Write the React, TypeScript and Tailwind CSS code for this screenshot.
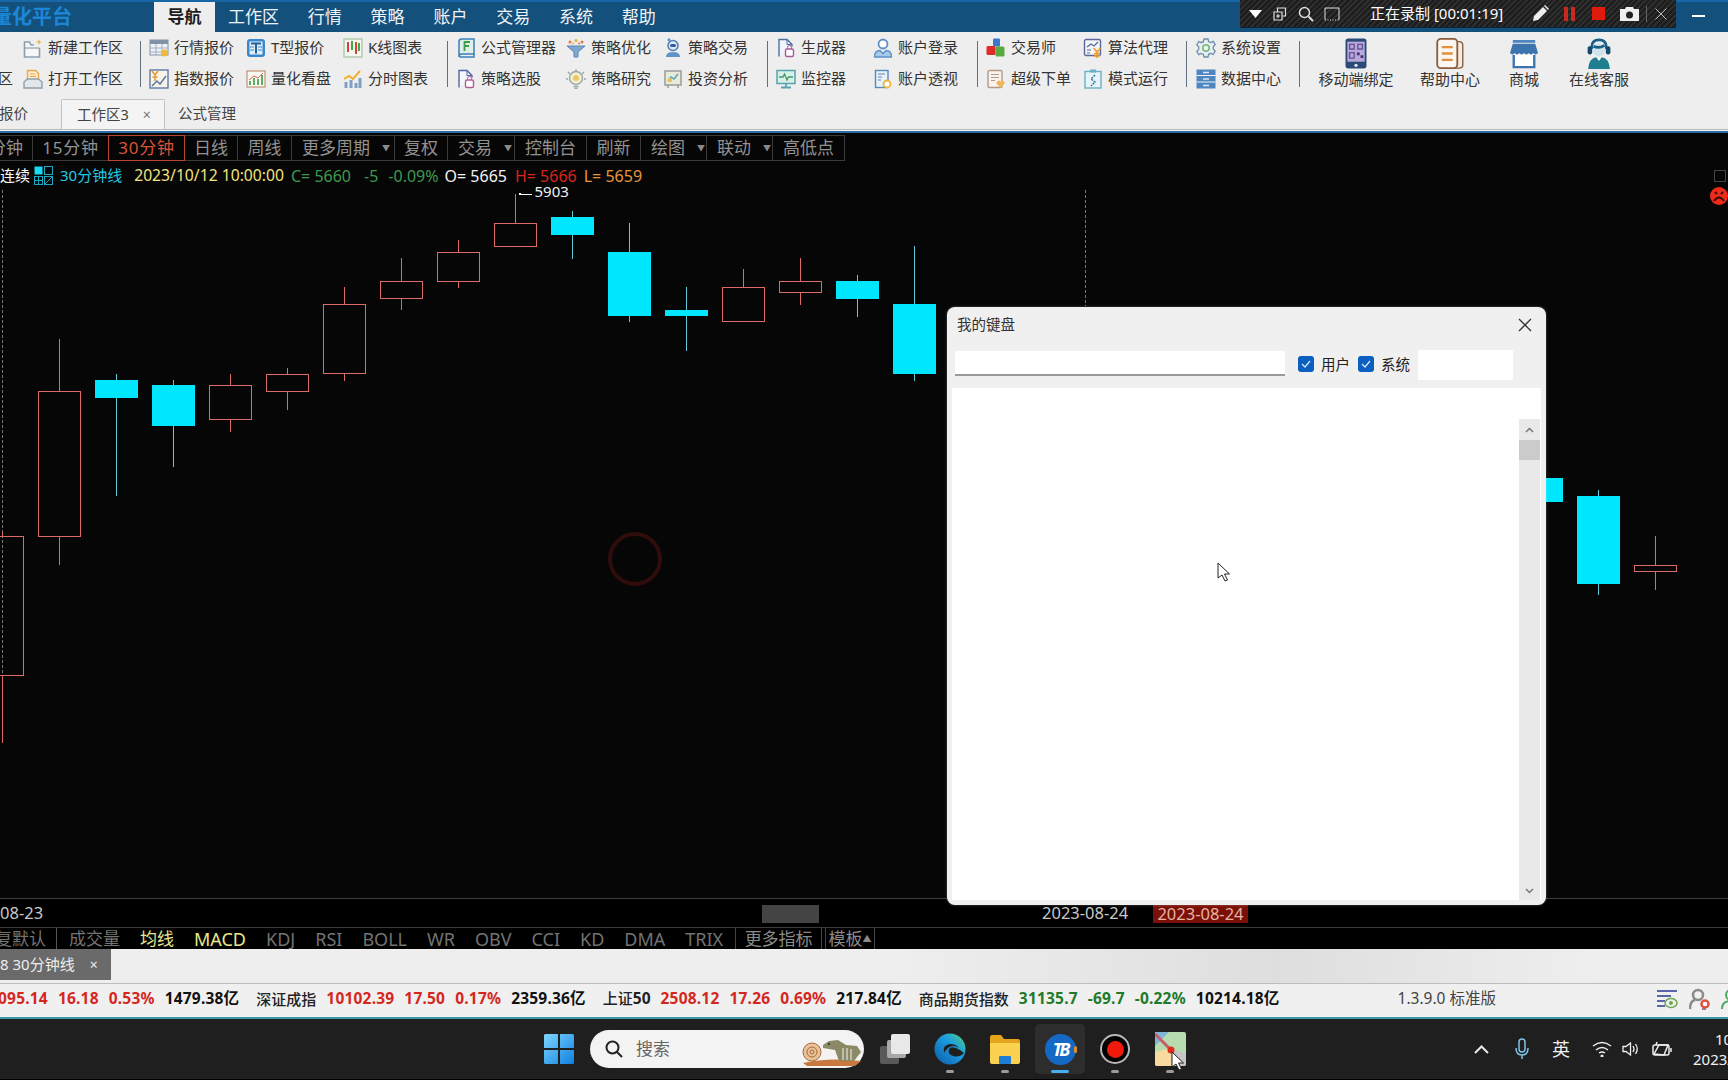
import React from 'react'

// --- ribbon icons, 20x20 ---
const Ic = ({ children, s = 20 }: { children: React.ReactNode; s?: number }) => (
  <svg width={s} height={s} viewBox="0 0 20 20" className="shrink-0" fill="none">
    {children}
  </svg>
)

const icons: Record<string, React.ReactNode> = {
  newspace: (
    <Ic>
      <path d="M11 7H8L6.500 4H1.500v15h15V10" stroke="#8ea0ae" strokeWidth="1.600" fill="#f4f6f7" />
      <path d="M1.500 10h15" stroke="#8ea0ae" strokeWidth="1.200" />
      <path d="M16 1l.8 2.200L19 4l-2.200.8L16 7l-.8-2.200L13 4l2.200-.8z" fill="#eeb64a" />
    </Ic>
  ),
  openspace: (
    <Ic>
      <path d="M4.500 10V1.500h8l3 3V10" fill="#fbeacb" stroke="#e8a850" strokeWidth="1.400" />
      <path d="M7 5h5M7 7.500h6" stroke="#e8a850" />
      <path d="M4.500 10h11l3.500 3v6H1v-6z" fill="#e3e7ea" stroke="#8ea0ae" strokeWidth="1.400" />
    </Ic>
  ),
  quote: (
    <Ic>
      <rect x="1" y="2" width="18" height="15" fill="#eef1f5" stroke="#8192a8" />
      <rect x="1" y="2" width="18" height="4" fill="#8192a8" />
      <path d="M1 10h18M1 14h18M7 6v11M13 6v11" stroke="#a3afc0" />
      <circle cx="15.500" cy="15" r="3.500" fill="#efb83e" />
    </Ic>
  ),
  index: (
    <Ic>
      <rect x="1" y="1" width="18" height="18" fill="#f7f3e8" stroke="#5e79a8" strokeWidth="1.400" />
      <path d="M3 2l3 4 3-4M6 6v6M3.500 8h5" stroke="#e5992d" strokeWidth="1.500" />
      <path d="M3 17l5-5 3 3 6-8" stroke="#5e79a8" strokeWidth="1.500" />
    </Ic>
  ),
  tquote: (
    <Ic>
      <rect x="1" y="1" width="18" height="18" rx="3" fill="#3b87c9" />
      <rect x="3.500" y="3.500" width="13" height="13" fill="#dfeefa" />
      <path d="M5 5.500h10M10 5.500v10" stroke="#1c5f9c" strokeWidth="2" />
      <path d="M4 9h4M4 12h4M12 9h4M12 12h4" stroke="#3b87c9" />
    </Ic>
  ),
  board: (
    <Ic>
      <rect x="1" y="2" width="18" height="16" fill="#fbf7f2" stroke="#b5805e" />
      <path d="M4 16v-4M8 16V9M12 16v-6M16 16V6" stroke="#5cae62" strokeWidth="2" />
      <path d="M3 11l5-4 4 2 5-5" stroke="#d9684d" />
    </Ic>
  ),
  kline: (
    <Ic>
      <rect x="1" y="1" width="18" height="18" fill="#f2f7ef" stroke="#a9c7a6" strokeWidth="1.300" />
      <path d="M5 4v10M13 4v12" stroke="#dc3f3a" strokeWidth="2" />
      <path d="M9 3v9M16 5v8" stroke="#45a648" strokeWidth="2" />
    </Ic>
  ),
  timechart: (
    <Ic>
      <path d="M1 10l5-3 4 3 7-8" stroke="#efb02e" strokeWidth="2" />
      <path d="M3 19v-6M8 19v-8M13 19v-5M17 19V9" stroke="#7da0c4" strokeWidth="3" />
    </Ic>
  ),
  formula: (
    <Ic>
      <path d="M3 3.500Q3 1 6 1h12v15H6q-3 0-3 2.500z" fill="#dff0ea" stroke="#3b7fb8" strokeWidth="1.500" />
      <path d="M3 18q0 1 3 1h12v-3" stroke="#3b7fb8" strokeWidth="1.500" />
      <path d="M14 4H8.500v9M8.500 8H13" stroke="#3f9a4a" strokeWidth="1.800" />
    </Ic>
  ),
  select: (
    <Ic>
      <path d="M3 18.500V1.500h8l5 5v2" fill="#f4f6fb" stroke="#55659b" strokeWidth="1.400" />
      <path d="M11 1.500v5h5" stroke="#55659b" />
      <rect x="9.500" y="11" width="8" height="7.500" rx="1.500" fill="#fff" stroke="#b65a9a" strokeWidth="1.400" />
      <path d="M11.500 11V9.500a2 2 0 014 0V11" stroke="#b65a9a" />
    </Ic>
  ),
  optimize: (
    <Ic>
      <path d="M1 8h18l-7 6v5h-4v-5z" fill="#7fa7d0" stroke="#5e86b3" />
      <circle cx="4" cy="4" r="1.500" fill="#e8764a" />
      <circle cx="10" cy="2.500" r="1.500" fill="#efb02e" />
      <circle cx="16" cy="4" r="1.500" fill="#e8764a" />
      <circle cx="7" cy="5.500" r="1" fill="#efb02e" />
      <circle cx="13" cy="5.500" r="1" fill="#e8764a" />
    </Ic>
  ),
  research: (
    <Ic>
      <circle cx="10" cy="9" r="6.500" fill="#f5efd0" stroke="#98a6a8" strokeWidth="1.400" />
      <circle cx="10" cy="9" r="3" fill="#e9c866" />
      <path d="M10 0v2.500M2 3l2 2M18 3l-2 2M0 10h2M18 10h2M7.500 17.500h5M8.500 19.500h3" stroke="#98a6a8" strokeWidth="1.300" />
    </Ic>
  ),
  trade: (
    <Ic>
      <circle cx="10" cy="7.500" r="5" fill="#dde9f6" stroke="#4a7cb5" strokeWidth="1.500" />
      <rect x="7" y="6" width="6" height="3" rx="1.500" fill="#2f5f96" />
      <path d="M3 19q0-5 7-5t7 5z" fill="#5f93c8" />
      <circle cx="6" cy="1.800" r="1.500" fill="#5f93c8" />
    </Ic>
  ),
  analysis: (
    <Ic>
      <rect x="2" y="2" width="16" height="14" fill="#e7ecd8" stroke="#9b9b9b" strokeWidth="1.500" />
      <path d="M5 12l3-4 3 2 4-5" stroke="#56a5b8" strokeWidth="1.500" />
      <rect x="5" y="9" width="4" height="4" fill="#e8c06a" />
      <path d="M5 16v3M15 16v3" stroke="#9b9b9b" strokeWidth="1.500" />
    </Ic>
  ),
  generator: (
    <Ic>
      <path d="M3 18.500V1.500h8l5 5v2" fill="#f1f5fb" stroke="#4c6fa0" strokeWidth="1.400" />
      <path d="M11 1.500v5h5" stroke="#4c6fa0" />
      <rect x="9.500" y="11" width="8" height="7.500" rx="1.500" fill="#fff" stroke="#a85a98" strokeWidth="1.400" />
      <path d="M11.500 11V9.500a2 2 0 014 0V11" stroke="#a85a98" />
    </Ic>
  ),
  monitor: (
    <Ic>
      <rect x="1" y="1.500" width="18" height="13" fill="#d9efe9" stroke="#57a3ad" strokeWidth="1.500" />
      <path d="M3 8h4l1.500-3 2.500 6 1.500-3H17" stroke="#3f9a60" strokeWidth="1.300" />
      <path d="M10 14.500v3M5 18.500h10" stroke="#57a3ad" strokeWidth="1.800" />
    </Ic>
  ),
  login: (
    <Ic>
      <circle cx="10" cy="6" r="4.500" fill="#fff" stroke="#5c90c8" strokeWidth="1.800" />
      <path d="M1.500 19q0-6.500 5.500-6.500l3 3 3-3q5.500 0 5.500 6.500z" fill="#a9c9e8" stroke="#5c90c8" strokeWidth="1.300" />
    </Ic>
  ),
  perspective: (
    <Ic>
      <rect x="2.500" y="1.500" width="12.500" height="17" fill="#e8f0f8" stroke="#5a8ab8" strokeWidth="1.400" />
      <path d="M5 5h7M5 8h4M5 11h3" stroke="#5a8ab8" />
      <circle cx="14" cy="15" r="3.500" fill="#fff" stroke="#eeb43a" strokeWidth="1.800" />
    </Ic>
  ),
  trader: (
    <Ic>
      <rect x="7" y="0.500" width="7" height="8" rx="1" fill="#3b78c9" />
      <rect x="0.500" y="8" width="9" height="9" rx="1.500" fill="#df2a2a" />
      <rect x="9.500" y="8.500" width="9" height="10" rx="1.500" fill="#58aa3f" />
    </Ic>
  ),
  superorder: (
    <Ic>
      <rect x="2" y="1.500" width="14" height="17" rx="1.500" fill="#f8f3ee" stroke="#b49a86" strokeWidth="1.400" />
      <path d="M5 5.500h8M5 8.500h8M5 11.500h4" stroke="#b49a86" />
      <path d="M10 14q3-4 4.500-1.500Q16 10 19 14l-4.500 5z" fill="#efb75a" />
    </Ic>
  ),
  algo: (
    <Ic>
      <rect x="1.500" y="1.500" width="16" height="16" rx="1.500" fill="#f3f5f9" stroke="#58699a" strokeWidth="1.400" />
      <path d="M4 9l4-3 3 2 4-4" stroke="#58699a" strokeWidth="1.300" />
      <path d="M4 12h4M4 15h3" stroke="#58699a" />
      <path d="M10.500 10l3.500 4 3.500-4M14 14v6M11 15.500h6M11 18h6" stroke="#ef9d25" strokeWidth="1.600" />
    </Ic>
  ),
  pattern: (
    <Ic>
      <rect x="2" y="2.500" width="16" height="16.500" fill="#e6f4f7" stroke="#6bb0c4" strokeWidth="1.400" />
      <rect x="7" y="0.500" width="6" height="3" fill="#6bb0c4" />
      <path d="M12 6l-4 4 4 3-4 4" stroke="#2f6f96" strokeWidth="1.400" strokeDasharray="2 1" />
    </Ic>
  ),
  settings: (
    <Ic>
      <path
        d="M8 1h4l.6 2.500 2.300 1 2.300-1.200 2 3.400-1.900 1.800v2.800l1.900 1.800-2 3.400-2.300-1.200-2.300 1L12 19H8l-.6-2.500-2.300-1-2.300 1.200-2-3.400 1.900-1.800V8.700L.8 6.900l2-3.400 2.300 1.200 2.300-1z"
        fill="#e9eff5"
        stroke="#6f8ca8"
        strokeWidth="1.300"
      />
      <circle cx="10" cy="10" r="3.200" fill="#eef6ea" stroke="#7dbb8b" strokeWidth="1.800" />
    </Ic>
  ),
  datacenter: (
    <Ic>
      <rect x="0.500" y="0.500" width="19" height="19" fill="#4f86bf" />
      <path d="M0.500 6.500h19M0.500 13h19" stroke="#eef4fa" strokeWidth="1.200" />
      <path d="M7 3.500h6M7 10h6M7 16.500h6" stroke="#d8e7f5" strokeWidth="1.600" />
    </Ic>
  ),
}

const big: Record<string, React.ReactNode> = {
  phone: (
    <svg width="22" height="31" viewBox="0 0 24 34" fill="none">
      <rect x="0.500" y="0.500" width="23" height="33" rx="3" fill="#2b4a78" />
      <rect x="2.500" y="4" width="19" height="22" fill="#b7a9d8" />
      <path d="M5 7h5v5H5zM14 7h5v5h-5zM5 16h5v6H5z" stroke="#6a4f9c" strokeWidth="1.500" />
      <path d="M13 16h3v3h-3zM17 19h3v3h-3z" fill="#44306e" />
      <circle cx="12" cy="30" r="1.800" fill="#dbe6f3" />
    </svg>
  ),
  help: (
    <svg width="28" height="31" viewBox="0 0 30 34" fill="none">
      <path d="M20 4h5q4 0 4 4v22q0 3-4 3H9" fill="#f4ebe3" stroke="#8a5c3c" strokeWidth="1.500" />
      <rect x="1" y="1" width="22" height="32" rx="4" fill="#fbf6f1" stroke="#8a5c3c" strokeWidth="2" />
      <path d="M6 10h12M6 17h12M6 24h12" stroke="#e0913f" strokeWidth="2.500" />
    </svg>
  ),
  store: (
    <svg width="28" height="30" viewBox="0 0 30 32" fill="none">
      <rect x="3" y="1" width="24" height="3" fill="#4f86bf" />
      <path d="M3 5h24l3 10q-3 3-5 0-2.500 3-5 0-2.500 3-5 0-2.500 3-5 0-2.500 3-5 0-2 3-5 0z" fill="#3c74ad" />
      <path d="M4 17v13h22V17" stroke="#3c74ad" strokeWidth="2.500" fill="#fff" />
    </svg>
  ),
  agent: (
    <svg width="26" height="31" viewBox="0 0 28 34" fill="none">
      <path d="M6 12V10q0-8 8-8t8 8v2" stroke="#1a5f86" strokeWidth="3" />
      <rect x="1.500" y="9" width="5" height="9" rx="2" fill="#154b70" />
      <rect x="21.500" y="9" width="5" height="9" rx="2" fill="#154b70" />
      <circle cx="14" cy="13" r="7" fill="#cfe3ea" />
      <path d="M8 9q6 3 12-1" stroke="#1a5f86" strokeWidth="3" />
      <path d="M2 34q1-12 9-13l3 4 3-4q8 1 9 13z" fill="#1f7f90" />
      <path d="M12 22l2 3 2-3" fill="#fff" />
    </svg>
  ),
}

type Cell = { icon: string; label: string } | null

const Col = ({ w, top, bottom }: { w: string; top: Cell; bottom: Cell }) => (
  <div className={`flex flex-col ${w}`}>
    {[top, bottom].map((c, i) => (
      <div key={i} className="flex h-[31px] items-center gap-[5px]">
        {c && icons[c.icon]}
        {c && <span className="whitespace-nowrap text-[15px] text-[#333]">{c.label}</span>}
      </div>
    ))}
  </div>
)

const Sep = ({ mr }: { mr: string }) => <div className={`mt-[9px] h-[46px] w-px bg-[#5f6f80] ${mr}`} />

const BigBtn = ({ w, icon, label }: { w: string; icon: string; label: string }) => (
  <div className={`flex flex-col items-center pt-[6px] ${w}`}>
    <div className="flex h-[31px] items-center">{big[icon]}</div>
    <span className="mt-[-1px] whitespace-nowrap text-[15px] text-[#333]">{label}</span>
  </div>
)

const Ribbon = () => (
  <div className="flex h-[67px] bg-[#eeeeee]">
    <div className="flex w-[23px] flex-col">
      <div className="h-[31px]" />
      <div className="flex h-[31px] items-center justify-end pr-[10px] text-[15px] text-[#333]">区</div>
    </div>
    <Col w="w-[117px]" top={{ icon: 'newspace', label: '新建工作区' }} bottom={{ icon: 'openspace', label: '打开工作区' }} />
    <Sep mr="mr-[8px]" />
    <Col w="w-[97px]" top={{ icon: 'quote', label: '行情报价' }} bottom={{ icon: 'index', label: '指数报价' }} />
    <Col w="w-[97px]" top={{ icon: 'tquote', label: 'T型报价' }} bottom={{ icon: 'board', label: '量化看盘' }} />
    <Col w="w-[104px]" top={{ icon: 'kline', label: 'K线图表' }} bottom={{ icon: 'timechart', label: '分时图表' }} />
    <Sep mr="mr-[8px]" />
    <Col w="w-[110px]" top={{ icon: 'formula', label: '公式管理器' }} bottom={{ icon: 'select', label: '策略选股' }} />
    <Col w="w-[97px]" top={{ icon: 'optimize', label: '策略优化' }} bottom={{ icon: 'research', label: '策略研究' }} />
    <Col w="w-[104px]" top={{ icon: 'trade', label: '策略交易' }} bottom={{ icon: 'analysis', label: '投资分析' }} />
    <Sep mr="mr-[8px]" />
    <Col w="w-[97px]" top={{ icon: 'generator', label: '生成器' }} bottom={{ icon: 'monitor', label: '监控器' }} />
    <Col w="w-[104px]" top={{ icon: 'login', label: '账户登录' }} bottom={{ icon: 'perspective', label: '账户透视' }} />
    <Sep mr="mr-[8px]" />
    <Col w="w-[97px]" top={{ icon: 'trader', label: '交易师' }} bottom={{ icon: 'superorder', label: '超级下单' }} />
    <Col w="w-[103px]" top={{ icon: 'algo', label: '算法代理' }} bottom={{ icon: 'pattern', label: '模式运行' }} />
    <Sep mr="mr-[9px]" />
    <Col w="w-[103px]" top={{ icon: 'settings', label: '系统设置' }} bottom={{ icon: 'datacenter', label: '数据中心' }} />
    <Sep mr="mr-[6px]" />
    <BigBtn w="w-[100px]" icon="phone" label="移动端绑定" />
    <BigBtn w="w-[88px]" icon="help" label="帮助中心" />
    <BigBtn w="w-[60px]" icon="store" label="商城" />
    <BigBtn w="w-[90px]" icon="agent" label="在线客服" />
  </div>
)

const RecordBar = () => (
  <div className="absolute left-[1240px] top-[-2px] flex h-[28px] w-[436px] items-center border-b border-[#0c2438] bg-[repeating-linear-gradient(135deg,#1c1c1c_0px,#1c1c1c_2px,#2e2e2e_2px,#2e2e2e_4px)] pl-[8px] text-white">
    <svg width="13" height="8" viewBox="0 0 13 8" className="ml-px"><path d="M0 0h13L6.500 8z" fill="#fff" /></svg>
    <svg width="14" height="14" viewBox="0 0 14 14" fill="none" className="ml-[11px]" stroke="#ddd" strokeWidth="1.200">
      <path d="M4.500 4.500V1h8v8H9M1 5h8v8H1zM5 7v4M3 9h4" />
    </svg>
    <svg width="16" height="16" viewBox="0 0 16 16" fill="none" className="ml-[11px]" stroke="#ddd" strokeWidth="1.500">
      <circle cx="6.500" cy="6.500" r="5" /><path d="M10.500 10.500L15 15" strokeWidth="2" />
    </svg>
    <svg width="16" height="14" viewBox="0 0 16 14" fill="none" className="ml-[10px]" stroke="#ddd">
      <path d="M1 13V1h14v12" /><path d="M1 13h14" strokeDasharray="1 1.500" />
    </svg>
    <span className="ml-[30px] whitespace-nowrap text-[15px]">正在录制 [00:01:19]</span>
    <svg width="17" height="17" viewBox="0 0 17 17" className="ml-[29px]"><path d="M1 16l1-5L11 2l4 4-9 9zM12 1l1-1 4 4-1 1z" fill="#eee" /></svg>
    <div className="ml-[15px] flex gap-[3px]"><div className="h-[14px] w-[4px] bg-[#c62a1f]" /><div className="h-[14px] w-[4px] bg-[#c62a1f]" /></div>
    <div className="ml-[17px] h-[13px] w-[13px] bg-[#e01b0c]" />
    <svg width="19" height="14" viewBox="0 0 19 14" className="ml-[15px]"><path d="M0 2h5l1-2h7l1 2h5v12H0z" fill="#eee" /><circle cx="9.500" cy="8" r="3.500" fill="#222" /></svg>
    <div className="ml-[7px] h-[16px] w-px bg-[#666]" />
    <svg width="12" height="12" viewBox="0 0 12 12" className="ml-[8px]" stroke="#bbb" strokeWidth="1"><path d="M0.500 0.500l11 11M11.500 0.500l-11 11" /></svg>
  </div>
)

const TitleBar = () => (
  <div className="relative flex h-[32px] shrink-0 items-end border-t-2 border-[#1767a6] bg-[#14507c]">
    <div className="flex h-full w-[154px] items-center overflow-hidden">
      <span className="ml-[-8px] whitespace-nowrap text-[20px] font-bold text-[#1c86d6]">量化平台</span>
    </div>
    <div className="flex h-full w-[61px] items-center justify-center bg-[#eeeeee] text-[17px] font-bold text-[#1d1d1d]">导航</div>
    <div className="ml-[13px] flex h-full items-center gap-[28.800px] text-[17px] text-[#f0f4f7]">
      <span>工作区</span>
      <span>行情</span>
      <span>策略</span>
      <span>账户</span>
      <span>交易</span>
      <span>系统</span>
      <span>帮助</span>
    </div>
    <RecordBar />
    <div className="absolute left-[1692px] top-[13px] h-[2px] w-[13px] bg-white" />
  </div>
)

const Tabs = () => (
  <div className="flex h-[31px] items-end border-b border-[#b9b9b9] bg-[#eeeeee] text-[14.5px] text-[#444]">
    <div className="flex h-full w-[61px] items-center overflow-hidden">
      <span className="ml-[-1px] whitespace-nowrap">报价</span>
    </div>
    <div className="flex h-full w-[104px] items-center rounded-t-[2px] border border-b-0 border-[#c4c4c4] bg-[#f4f4f4] pl-[15px]">
      工作区3
      <span className="ml-[14px] text-[14px] text-[#777]">×</span>
    </div>
    <div className="flex h-full items-center pl-[13px]">公式管理</div>
  </div>
)

const ToolCell = ({ w, label, caret }: { w: string; label: string; caret?: boolean }) => (
  <div className={`flex h-full shrink-0 items-center whitespace-nowrap border-r border-[#3a3a3a] ${caret ? 'pl-[10px]' : 'justify-center'} ${w}`}>
    {label}
    {caret && <span className="ml-[12px] text-[8px] text-[#8a8a8a]">▼</span>}
  </div>
)

const Toolbar = () => (
  <div className="mt-[2px] flex h-[26px] w-[845px] items-center border-y border-[#3a3a3a] text-[17px] text-[#929292]">
    <div className="flex h-full w-[33px] shrink-0 items-center justify-end overflow-hidden border-r border-[#3a3a3a] pr-[9px]">
      <span className="whitespace-nowrap">分钟</span>
    </div>
    <div className="flex h-full w-[75px] shrink-0 items-center justify-center tracking-[0.8px]">15分钟</div>
    <div className="flex h-[26px] w-[77px] shrink-0 items-center justify-center border border-[#b8452c] tracking-[0.8px] text-[#d8523a]">30分钟</div>
    <ToolCell w="w-[53px]" label="日线" />
    <ToolCell w="w-[54px]" label="周线" />
    <ToolCell w="w-[103px]" label="更多周期" caret />
    <ToolCell w="w-[53px]" label="复权" />
    <ToolCell w="w-[67px]" label="交易" caret />
    <ToolCell w="w-[72px]" label="控制台" />
    <ToolCell w="w-[54px]" label="刷新" />
    <ToolCell w="w-[66px]" label="绘图" caret />
    <ToolCell w="w-[66px]" label="联动" caret />
    <ToolCell w="w-[72px]" label="高低点" />
  </div>
)

const InfoRow = () => (
  <div className="flex h-[29px] items-center whitespace-nowrap text-[16px]">
    <span className="w-[30px] overflow-hidden text-right text-[15px] text-white">连续</span>
    <svg width="19" height="19" viewBox="0 0 19 19" className="ml-[4px]" fill="none">
      <rect x="0.500" y="0.500" width="8" height="8" fill="#19d8f0" />
      <rect x="10.500" y="0.500" width="8" height="8" stroke="#19a8c0" />
      <rect x="0.500" y="10.500" width="8" height="8" stroke="#19a8c0" />
      <rect x="10.500" y="10.500" width="8" height="8" stroke="#19a8c0" />
      <path d="M0.500 14.500h8M4.500 10.500v8M11 18l7-7" stroke="#19a8c0" />
    </svg>
    <span className="ml-[7px] text-[15px] text-[#25c8e0]">30分钟线</span>
    <span className="ml-[12px] text-[15.700px] text-[#f1e37e]">2023/10/12 10:00:00</span>
    <span className="ml-[7px] text-[#3f9a50]">C= 5660</span>
    <span className="ml-[13px] text-[#3f9a50]">-5</span>
    <span className="ml-[10px] text-[#3f9a50]">-0.09%</span>
    <span className="ml-[6px] text-[#f2f2f2]">O= 5665</span>
    <span className="ml-[8px] text-[#d8241c]">H= 5666</span>
    <span className="ml-[7px] text-[#e8963c]">L= 5659</span>
  </div>
)

// x, half width is fixed; body top/bottom, wick top/bottom, up = hollow red candle
const candles: { x: number; t: number; b: number; wt: number; wb: number; up?: boolean }[] = [
  { x: 2.5, t: 536.5, b: 675.5, wt: 532, wb: 743, up: true },
  { x: 59.5, t: 391.5, b: 536.5, wt: 339, wb: 565, up: true },
  { x: 116.5, t: 380, b: 398, wt: 374, wb: 496 },
  { x: 173.5, t: 385, b: 426, wt: 380, wb: 467 },
  { x: 230.5, t: 385.5, b: 419.5, wt: 374, wb: 432, up: true },
  { x: 287.5, t: 374.5, b: 391.5, wt: 368, wb: 410, up: true },
  { x: 344.5, t: 304.5, b: 373.5, wt: 287, wb: 381, up: true },
  { x: 401.5, t: 281.5, b: 298.5, wt: 258, wb: 310, up: true },
  { x: 458.5, t: 252.5, b: 281.5, wt: 240, wb: 288, up: true },
  { x: 515.5, t: 223.5, b: 246.5, wt: 194, wb: 246, up: true },
  { x: 572.5, t: 217, b: 235, wt: 211, wb: 259 },
  { x: 629.5, t: 252, b: 316, wt: 223, wb: 322 },
  { x: 686.5, t: 310, b: 316, wt: 287, wb: 351 },
  { x: 743.5, t: 287.5, b: 321.5, wt: 269, wb: 321, up: true },
  { x: 800.5, t: 281.5, b: 292.5, wt: 258, wb: 305, up: true },
  { x: 857.5, t: 281, b: 299, wt: 275, wb: 317 },
  { x: 914.5, t: 304, b: 374, wt: 246, wb: 381 },
  { x: 1541.5, t: 478, b: 502, wt: 478, wb: 502 },
  { x: 1598.5, t: 496, b: 584, wt: 490, wb: 595 },
  { x: 1655.5, t: 565.5, b: 571.5, wt: 536, wb: 590, up: true },
]

const Chart = () => (
  <svg
    className="absolute left-0 top-0"
    width="1728"
    height="765"
    viewBox="0 133 1728 765"
    fill="none"
    shapeRendering="crispEdges"
  >
    <path d="M2.500 190V740M1085.500 190V306" stroke="#777" strokeDasharray="3 2" />
    {candles.map((c) =>
      c.up ? (
        <g key={c.x} stroke="#dc6b68">
          <path d={`M${c.x} ${c.wt}V${c.t}M${c.x} ${c.b}V${c.wb}`} />
          <rect x={c.x - 21} y={c.t} width="42" height={c.b - c.t} />
        </g>
      ) : (
        <g key={c.x}>
          <path d={`M${c.x} ${c.wt}V${c.wb}`} stroke="#62c8d8" />
          <rect x={c.x - 21.5} y={c.t} width="43" height={c.b - c.t} fill="#00e6ff" />
        </g>
      ),
    )}
    <path d="M520 194h12" stroke="#fff" />
    <circle cx="520" cy="194" r="1.500" fill="#fff" />
    <text x="534.500" y="197" fill="#f2f2f2" fontSize="15">5903</text>
    <circle cx="635" cy="559" r="25" stroke="#300d0a" strokeWidth="4" shapeRendering="auto" />
    <rect x="1714.500" y="170.500" width="11" height="11" stroke="#444" />
    <circle cx="1719" cy="196" r="9" fill="#ee2a18" shapeRendering="auto" />
    <path d="M1714 201q5-7 10 0M1715 192l2 2M1723 192l-2 2" stroke="#3a0a06" strokeWidth="1.800" shapeRendering="auto" />
  </svg>
)

const Check = () => (
  <div className="flex h-[16px] w-[16px] items-center justify-center rounded-[3px] bg-[#0a5fc0]">
    <svg width="10" height="8" viewBox="0 0 10 8" fill="none"><path d="M1 4l3 3 5-6" stroke="#dcecff" strokeWidth="1.200" /></svg>
  </div>
)

const KeyboardDialog = () => (
  <div className="absolute left-[947px] top-[307px] flex h-[598px] w-[599px] flex-col rounded-[8px] bg-[#f0f0f0] shadow-[0_0_3px_rgba(255,255,255,0.3)]">
    <div className="flex h-[36px] items-center justify-between pl-[10px] pr-[14px] text-[14.5px] text-[#333]">
      我的键盘
      <svg width="14" height="14" viewBox="0 0 14 14" stroke="#333" strokeWidth="1.300"><path d="M1 1l12 12M13 1L1 13" /></svg>
    </div>
    <div className="mt-[7px] flex h-[30px] items-center pl-[8px] text-[14.500px] leading-[20px] text-[#222]">
      <div className="mt-px h-[25px] w-[330px] self-start border-b-2 border-[#999] bg-white" />
      <div className="ml-[13px] mb-[2px]"><Check /></div>
      <span className="ml-[7px] mb-[2px]">用户</span>
      <div className="ml-[8px] mb-[2px]"><Check /></div>
      <span className="ml-[7px] mb-[2px]">系统</span>
      <div className="ml-[8px] h-[30px] w-[95px] bg-white" />
    </div>
    <div className="mx-[5px] mb-[5px] mt-[8px] flex flex-1 justify-end bg-white pr-px pt-[31px]">
      <div className="flex w-[21px] flex-col bg-[#e9e9e9]">
        <div className="flex h-[21px] items-center justify-center">
          <svg width="9" height="6" viewBox="0 0 9 6" fill="none"><path d="M1 5l3.500-3.500L8 5" stroke="#777" strokeWidth="1.500" /></svg>
        </div>
        <div className="h-[20px] bg-[#cbcbcb]" />
        <div className="flex-1" />
        <div className="flex h-[18px] items-center justify-center">
          <svg width="9" height="6" viewBox="0 0 9 6" fill="none"><path d="M1 1l3.500 3.500L8 1" stroke="#777" strokeWidth="1.500" /></svg>
        </div>
      </div>
    </div>
  </div>
)

const Cursor = ({ cls }: { cls: string }) => (
  <svg width="14" height="20" viewBox="0 0 14 20" className={`absolute ${cls}`}>
    <path d="M1 1v15l4-3 3 6 2.500-1-3-6h5z" fill="#fff" stroke="#222" strokeWidth="1" />
  </svg>
)

const DateRow = () => (
  <div className="relative h-[29px] border-t border-[#3c3c3c] text-[16.500px] leading-[22px] text-[#c8c8c8]">
    <span className="absolute left-0 top-[3px]">08-23</span>
    <div className="absolute left-[762px] top-[6px] h-[18px] w-[57px] bg-[#444]" />
    <span className="absolute left-[1042px] top-[3px]">2023-08-24</span>
    <span className="absolute left-[1153px] top-[6px] flex h-[18px] w-[95px] items-center justify-center bg-[#7a1008] text-[#e8b4a4]">2023-08-24</span>
  </div>
)

const IndicatorRow = () => (
  <div className="flex h-[22px] items-center border-t border-[#3c3c3c] text-[18px] leading-none text-[#737373]">
    <div className="flex h-full w-[57px] shrink-0 items-center justify-end overflow-hidden border-r border-[#555] pr-[10px] text-[17px]">
      <span className="whitespace-nowrap">复默认</span>
    </div>
    <div className="ml-[12px] flex items-center gap-[20px]">
      <span className="text-[17px]">成交量</span>
      <span className="text-[17px] text-[#e9e88f]">均线</span>
      <span className="text-[#e9e88f]">MACD</span>
      <span>KDJ</span>
      <span>RSI</span>
      <span>BOLL</span>
      <span>WR</span>
      <span>OBV</span>
      <span>CCI</span>
      <span>KD</span>
      <span>DMA</span>
      <span>TRIX</span>
    </div>
    <div className="ml-[12px] flex h-full w-[87px] items-center justify-center border-x border-[#444] text-[17px] text-[#8a8a8a]">更多指标</div>
    <div className="ml-[3px] flex h-full w-[50px] items-center justify-center border-x border-[#444] text-[17px] text-[#8a8a8a]">
      模板<span className="text-[9px]">▲</span>
    </div>
  </div>
)

const TabBar = () => (
  <div className="h-[35px] border-b border-[#bdbdbd] bg-[linear-gradient(90deg,#eeeeee_52%,#dedede_74%,#eeeeee_92%)]">
    <div className="flex h-[31px] w-[111px] items-center bg-[#6a6a6a] text-[15px] text-[#eee]">
      8 30分钟线
      <span className="ml-[15px] text-[14px]">×</span>
    </div>
  </div>
)

const Quote = ({ name, vals, vol, green }: { name?: React.ReactNode; vals: string[]; vol: string; green?: boolean }) => (
  <div className="flex items-center tracking-[0.2px]">
    {name && <span className="mr-[10px] text-[15px] font-medium tracking-normal text-[#222]">{name}</span>}
    {vals.map((v) => (
      <span key={v} className={`mr-[10px] font-bold ${green ? 'text-[#1f7a2a]' : 'text-[#d4281f]'}`}>{v}</span>
    ))}
    <span className="font-bold text-[#111]">{vol}</span>
  </div>
)

const StatusBar = () => (
  <div className="flex h-[35px] items-center overflow-hidden border-b-2 border-[#3a98a8] bg-[#f0f0f0] pb-[3px] text-[15.500px]">
    <div className="ml-[-2px] flex w-[1642px] shrink-0 items-center gap-[17px] overflow-hidden whitespace-nowrap">
      <Quote vals={['095.14', '16.18', '0.53%']} vol="1479.38亿" />
      <Quote name="深证成指" vals={['10102.39', '17.50', '0.17%']} vol="2359.36亿" />
      <Quote name={<>上证<b className="text-[15.500px]">50</b></>} vals={['2508.12', '17.26', '0.69%']} vol="217.84亿" />
      <Quote name="商品期货指数" vals={['31135.7', '-69.7', '-0.22%']} vol="10214.18亿" green />
      <span className="ml-[101px] text-[15.500px] font-normal text-[#444]">1.3.9.0 标准版</span>
    </div>
    <svg width="22" height="22" viewBox="0 0 22 22" className="ml-[16px] shrink-0" fill="none">
      <path d="M1 3h20M1 8h14M1 13h8M1 18h8" stroke="#5b66a8" strokeWidth="2.200" />
      <ellipse cx="15" cy="15" rx="6" ry="4.500" stroke="#6fa850" strokeWidth="1.500" />
      <circle cx="15" cy="15" r="2" fill="#6fa850" />
    </svg>
    <svg width="22" height="22" viewBox="0 0 22 22" className="ml-[11px] shrink-0" fill="none">
      <circle cx="9" cy="7" r="5" stroke="#8a8a8a" strokeWidth="2.500" />
      <path d="M1 21q0-8 5-9M17 21h-4" stroke="#8a8a8a" strokeWidth="2.500" />
      <circle cx="16" cy="16" r="3.500" fill="#fff" stroke="#e2503f" strokeWidth="2.500" />
    </svg>
    <svg width="22" height="22" viewBox="0 0 22 22" className="ml-[9px] shrink-0" fill="none">
      <circle cx="11" cy="7" r="5" stroke="#4fa85c" strokeWidth="2" />
      <path d="M2 21q0-8 9-8" stroke="#4fa85c" strokeWidth="2" />
    </svg>
  </div>
)

const AppCell = ({ children, active, dot = true }: { children: React.ReactNode; active?: boolean; dot?: boolean }) => (
  <div className={`relative flex h-[50px] w-[50px] items-center justify-center rounded-[5px] ${active ? 'bg-[#2d2d2d]' : ''}`}>
    {children}
    {dot && <div className={`absolute bottom-[1px] h-[3px] rounded-full ${active ? 'w-[18px] bg-[#47aef0]' : 'w-[8px] bg-[#9a9a9a]'}`} />}
  </div>
)

const Taskbar = () => (
  <div className="flex h-[60px] items-center bg-[#1f1f1f] pl-[544px]">
    <svg width="30" height="30" viewBox="0 0 30 30" className="shrink-0">
      <defs>
        <linearGradient id="win" x1="0" y1="0" x2="1" y2="1">
          <stop offset="0" stopColor="#7ed6ff" />
          <stop offset="1" stopColor="#0f7fe0" />
        </linearGradient>
      </defs>
      <path d="M0 1.500Q0 0 1.500 0H14v14H0zM16 0h12.500Q30 0 30 1.500V14H16zM0 16h14v14H1.500Q0 30 0 28.500zM16 16h14v12.500Q30 30 28.500 30H16z" fill="url(#win)" />
    </svg>
    <div className="ml-[16px] flex h-[38px] w-[274px] shrink-0 items-center rounded-full bg-[#f3f3f3] pl-[15px]">
      <svg width="18" height="18" viewBox="0 0 18 18" fill="none" stroke="#222" strokeWidth="2">
        <circle cx="7.500" cy="7.500" r="6" /><path d="M12 12l5 5" />
      </svg>
      <span className="ml-[13px] text-[17px] text-[#666]">搜索</span>
      <svg width="62" height="36" viewBox="0 0 62 36" className="ml-[auto] mr-[1px]" fill="none">
        <path d="M2 32q25-6 58-2l-6 5H6z" fill="#c9793f" />
        <circle cx="11" cy="21" r="9" fill="#e8c39a" stroke="#a9683a" />
        <circle cx="11" cy="21" r="5" stroke="#a9683a" />
        <circle cx="11" cy="21" r="2" stroke="#a9683a" />
        <path d="M22 14l6-4 9-1 8 5 11 1 4 6-7 9H38l-4-11-6-1-6-1z" fill="#8c8a66" />
        <path d="M42 17v12M46 17v12M50 18v11" stroke="#f3f3f3" />
        <circle cx="28" cy="13" r="1" fill="#222" />
      </svg>
    </div>
    <div className="ml-[6px] flex gap-[5px]">
      <AppCell dot={false}>
        <svg width="30" height="30" viewBox="0 0 30 30">
          <rect x="0" y="12" width="19" height="18" rx="2" fill="#5a5a5a" />
          <rect x="7" y="6" width="19" height="18" rx="2" fill="#a8a8a8" />
          <rect x="11" y="0" width="19" height="20" rx="2" fill="#e8e8e8" />
        </svg>
      </AppCell>
      <AppCell>
        <svg width="32" height="32" viewBox="0 0 32 32">
          <defs>
            <linearGradient id="edge" x1="0" y1="1" x2="1" y2="0">
              <stop offset="0" stopColor="#0c59a4" />
              <stop offset="0.6" stopColor="#1b9de2" />
              <stop offset="1" stopColor="#52d27a" />
            </linearGradient>
          </defs>
          <circle cx="16" cy="16" r="15.500" fill="url(#edge)" />
          <path d="M30 20q-5 5-11 3-6-2-4-7 2-3 7-1 5 2 8 5zM10 20q-2-8 6-9 6 0 9 4-6-4-11 0-3 3-4 5" fill="#1f1f1f" />
        </svg>
      </AppCell>
      <AppCell>
        <svg width="32" height="30" viewBox="0 0 32 30">
          <path d="M1 3q0-2 2-2h9l3 4h14q2 0 2 2v3H1z" fill="#e4a41e" />
          <path d="M1 9h30v19q0 2-2 2H3q-2 0-2-2z" fill="#fbd24f" />
          <rect x="10" y="22" width="12" height="8" rx="1" fill="#1f7fd6" />
        </svg>
      </AppCell>
      <AppCell active>
        <div className="relative flex h-[31px] w-[31px] items-center justify-center rounded-full bg-[#1469c4]">
          <span className="text-[18px] font-bold italic leading-none tracking-[-3px] text-white">TB</span>
          <div className="absolute right-[-1px] top-[12px] h-[7px] w-[3px] rounded-full bg-[#e08a2a]" />
        </div>
      </AppCell>
      <AppCell>
        <div className="flex h-[30px] w-[30px] items-center justify-center rounded-full border-2 border-[#b8b8b8] bg-black">
          <div className="h-[17px] w-[17px] rounded-full bg-[#f01a0c]" />
        </div>
      </AppCell>
      <AppCell>
        <svg width="31" height="34" viewBox="0 0 31 34">
          <rect width="31" height="34" rx="2" fill="#b7dcae" />
          <path d="M0 0h14L0 14z" fill="#7fb6d8" />
          <path d="M0 20L16 16v18H2q-2 0-2-2z" fill="#f8d9a0" />
          <path d="M16 16l15 6v10q0 2-2 2H16z" fill="#c6c6c6" />
          <path d="M0 2l16 16" stroke="#c85a6e" strokeWidth="3" />
          <circle cx="16" cy="18" r="3.500" fill="#e02a1a" />
        </svg>
      </AppCell>
    </div>
    <svg width="15" height="9" viewBox="0 0 15 9" fill="none" className="ml-[279px]" stroke="#e8e8e8" strokeWidth="2"><path d="M1 8l6.500-6.500L14 8" /></svg>
    <svg width="14" height="22" viewBox="0 0 14 22" fill="none" className="ml-[26px]" stroke="#7fc4e8" strokeWidth="1.500">
      <rect x="4" y="1" width="6" height="13" rx="3" /><path d="M1 10q0 7 6 7t6-7M7 17v4" />
    </svg>
    <span className="ml-[23px] text-[18px] text-[#f0f0f0]">英</span>
    <svg width="20" height="16" viewBox="0 0 20 16" fill="none" className="ml-[22px]" stroke="#eee" strokeWidth="1.500">
      <path d="M1 5q9-7 18 0M4 9q6-5 12 0M7 12q3-2 6 0" /><circle cx="10" cy="15" r="0.800" fill="#eee" />
    </svg>
    <svg width="18" height="16" viewBox="0 0 18 16" fill="none" className="ml-[10px]" stroke="#eee" strokeWidth="1.300">
      <path d="M1 5.500h3L8.500 2v12L4 10.500H1zM11 5q2 3 0 6M13.500 3q3.500 5 0 10" />
    </svg>
    <svg width="20" height="16" viewBox="0 0 20 16" fill="none" className="ml-[12px]" stroke="#eee" strokeWidth="1.500">
      <rect x="1" y="4" width="16" height="10" rx="2" /><path d="M19 7v4M2 13l5-9h9l-4 10z" /><path d="M4 4l1-3" />
    </svg>
    <div className="ml-[21px] w-[35px] shrink-0 overflow-hidden whitespace-nowrap text-[15px] leading-[20px] text-[#f0f0f0]">
      <div className="pl-[22px]">10</div>
      <div>2023/</div>
    </div>
  </div>
)

export default function App() {
  return (
    <div className="relative flex h-[1080px] w-[1728px] flex-col overflow-hidden bg-black font-['Noto_Sans','Noto_Sans_CJK_SC',sans-serif]">
      <TitleBar />
      <Ribbon />
      <Tabs />
      <div className="h-[3px] border-b-2 border-[#2c6ca6] bg-[#f4f4f4]" />

      <div className="relative h-[765px] bg-[#060606]">
        <Chart />
        <div className="relative">
          <Toolbar />
          <InfoRow />
        </div>
      </div>

      <DateRow />
      <IndicatorRow />
      <TabBar />
      <StatusBar />
      <Taskbar />

      <KeyboardDialog />
      <Cursor cls="left-[1217px] top-[562px]" />
      <Cursor cls="left-[1171px] top-[1051px]" />
    </div>
  )
}
